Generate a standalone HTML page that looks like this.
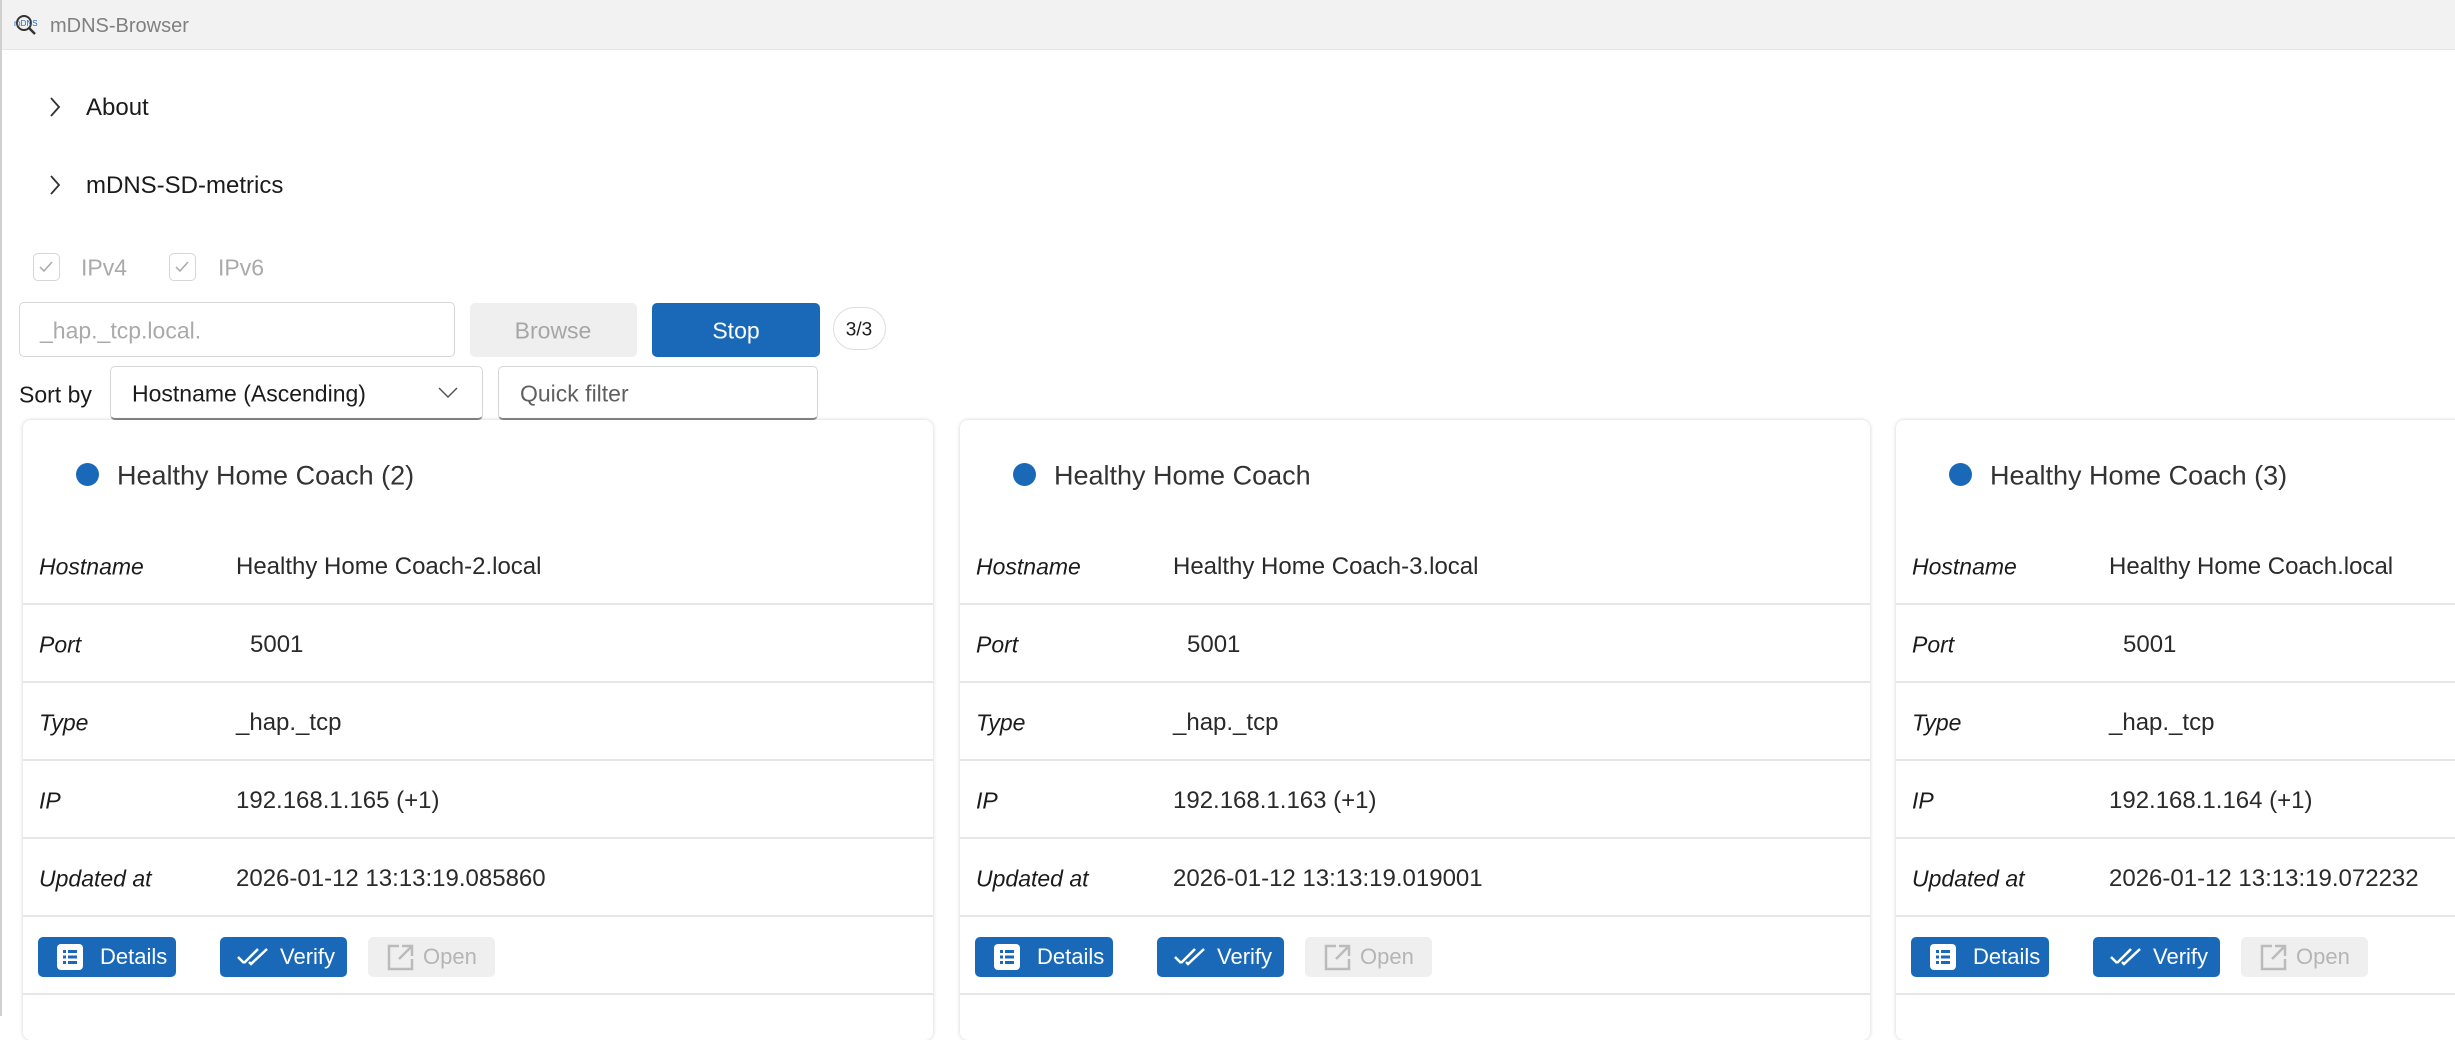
<!DOCTYPE html>
<html><head><meta charset="utf-8"><style>
*{box-sizing:border-box;margin:0;padding:0}
body{width:2455px;height:1016px;overflow:hidden;background:#fff;font-family:"Liberation Sans",sans-serif;color:#1b1b1b;position:relative}
.abs{position:absolute}
.tb{left:0;top:0;width:2455px;height:50px;background:#f2f2f2;border-bottom:1px solid #e6e6e6}
.lb{left:0;top:0;width:2px;height:1016px;background:#d0d0d0}
.t{font-size:23px;line-height:1;white-space:nowrap}
.vc{transform:translateY(-50%)}
.box{border:1px solid #d6d6d6;border-radius:5px}
.card{top:420px;width:910px;height:620px;background:#fff;border-radius:8px;box-shadow:0 0 4px rgba(0,0,0,.18)}
.row{position:absolute;left:0;right:0;height:78px;border-bottom:2px solid #e6e6e6}
.row .l{position:absolute;left:16px;top:40px;transform:translateY(-50%);font-style:italic;font-size:23px}
.row .v{position:absolute;left:213px;top:40px;transform:translateY(-50%);font-size:24px;color:#2a2a2a}
.btn{position:absolute;top:517px;height:40px;border-radius:5px;background:#1a69b9;color:#fff;font-size:22px}
.btn span{position:absolute;top:20px;transform:translateY(-50%)}
.btn svg{position:absolute;top:7px}
</style></head><body>
<div class="abs tb"></div>
<div class="abs lb"></div>
<svg class="abs" style="left:13px;top:14px" width="26" height="22" viewBox="0 0 26 22"><circle cx="11" cy="9" r="7" fill="none" stroke="#333" stroke-width="2"/><line x1="16" y1="14" x2="22" y2="20" stroke="#333" stroke-width="2.5"/><text x="1" y="12" font-size="8" fill="#1a69b9" font-family="Liberation Sans">mDNS</text></svg>
<div class="abs t vc" style="left:50px;top:26px;font-size:20px;color:#808080">mDNS-Browser</div>

<svg class="abs" style="left:48px;top:96px" width="14" height="22"><path d="M3 2 L11 11 L3 20" fill="none" stroke="#333" stroke-width="1.8"/></svg>
<div class="abs t vc" style="left:86px;top:108px;font-size:24px">About</div>
<svg class="abs" style="left:48px;top:174px" width="14" height="22"><path d="M3 2 L11 11 L3 20" fill="none" stroke="#333" stroke-width="1.8"/></svg>
<div class="abs t vc" style="left:86px;top:186px;font-size:24px">mDNS-SD-metrics</div>

<div class="abs box" style="left:33px;top:253px;width:27px;height:28px"></div>
<svg class="abs" style="left:38px;top:260px" width="16" height="14"><path d="M2 7 L6 11 L14 2" fill="none" stroke="#aaa" stroke-width="1.5"/></svg>
<div class="abs t vc" style="left:81px;top:268px;color:#aaa">IPv4</div>
<div class="abs box" style="left:169px;top:253px;width:27px;height:28px"></div>
<svg class="abs" style="left:174px;top:260px" width="16" height="14"><path d="M2 7 L6 11 L14 2" fill="none" stroke="#aaa" stroke-width="1.5"/></svg>
<div class="abs t vc" style="left:218px;top:268px;color:#aaa">IPv6</div>

<div class="abs box" style="left:19px;top:302px;width:436px;height:55px"></div>
<div class="abs t vc" style="left:40px;top:331px;color:#aaa">_hap._tcp.local.</div>
<div class="abs" style="left:470px;top:303px;width:167px;height:54px;background:#efefef;border-radius:5px"></div>
<div class="abs t vc" style="left:553px;top:331px;color:#a6a6a6;transform:translate(-50%,-50%)">Browse</div>
<div class="abs" style="left:652px;top:303px;width:168px;height:54px;background:#1a69b9;border-radius:5px"></div>
<div class="abs t vc" style="left:736px;top:331px;color:#fff;transform:translate(-50%,-50%)">Stop</div>
<div class="abs" style="left:833px;top:307px;width:53px;height:43px;border:1px solid #ddd;border-radius:22px"></div>
<div class="abs t vc" style="left:859px;top:330px;font-size:19px;transform:translate(-50%,-50%)">3/3</div>

<div class="abs t vc" style="left:19px;top:395px">Sort by</div>
<div class="abs box" style="left:110px;top:366px;width:373px;height:54px;border-bottom:2px solid #888"></div>
<div class="abs t vc" style="left:132px;top:394px">Hostname (Ascending)</div>
<svg class="abs" style="left:437px;top:386px" width="22" height="14"><path d="M2 2 L11 11 L20 2" fill="none" stroke="#555" stroke-width="1.5"/></svg>
<div class="abs box" style="left:498px;top:366px;width:320px;height:54px;border-bottom:2px solid #888"></div>
<div class="abs t vc" style="left:520px;top:394px;color:#5f5f5f">Quick filter</div>

<div class="abs card" style="left:23px">
<div class="abs" style="left:53px;top:43px;width:23px;height:23px;border-radius:50%;background:#1a69b9"></div>
<div class="abs t vc" style="left:94px;top:56px;font-size:27px;color:#333">Healthy Home Coach (2)</div>
<div class="row" style="top:107px"><div class="l">Hostname</div><div class="v">Healthy Home Coach-2.local</div></div>
<div class="row" style="top:185px"><div class="l">Port</div><div class="v" style="left:227px">5001</div></div>
<div class="row" style="top:263px"><div class="l">Type</div><div class="v">_hap._tcp</div></div>
<div class="row" style="top:341px"><div class="l">IP</div><div class="v">192.168.1.165 (+1)</div></div>
<div class="row" style="top:419px"><div class="l">Updated at</div><div class="v">2026-01-12 13:13:19.085860</div></div>
<div class="row" style="top:497px;height:78px"></div>
<div class="btn" style="left:15px;width:138px"><svg style="left:19px" width="26" height="26"><rect x="0" y="0" width="26" height="26" rx="4" fill="#fff"/><g fill="#1a69b9"><rect x="6" y="6" width="3" height="3"/><rect x="11" y="6" width="9" height="3"/><rect x="6" y="11.5" width="3" height="3"/><rect x="11" y="11.5" width="9" height="3"/><rect x="6" y="17" width="3" height="3"/><rect x="11" y="17" width="9" height="3"/></g></svg><span style="left:62px">Details</span></div>
<div class="btn" style="left:197px;width:127px"><svg style="left:16px;top:8px" width="36" height="24"><path d="M2 12 L8 18 M8 18 L22 4 M13 17 L15 19 L31 4" fill="none" stroke="#fff" stroke-width="2.5"/></svg><span style="left:60px">Verify</span></div>
<div class="btn" style="left:345px;width:127px;background:#efefef;color:#b5b5b5"><svg style="left:19px" width="27" height="27"><path d="M12 2 H2 V25 H25 V15 M15 2 H25 V12 M25 2 L12 15" fill="none" stroke="#bbb" stroke-width="2.5"/></svg><span style="left:55px">Open</span></div>
</div>

<div class="abs card" style="left:960px">
<div class="abs" style="left:53px;top:43px;width:23px;height:23px;border-radius:50%;background:#1a69b9"></div>
<div class="abs t vc" style="left:94px;top:56px;font-size:27px;color:#333">Healthy Home Coach</div>
<div class="row" style="top:107px"><div class="l">Hostname</div><div class="v">Healthy Home Coach-3.local</div></div>
<div class="row" style="top:185px"><div class="l">Port</div><div class="v" style="left:227px">5001</div></div>
<div class="row" style="top:263px"><div class="l">Type</div><div class="v">_hap._tcp</div></div>
<div class="row" style="top:341px"><div class="l">IP</div><div class="v">192.168.1.163 (+1)</div></div>
<div class="row" style="top:419px"><div class="l">Updated at</div><div class="v">2026-01-12 13:13:19.019001</div></div>
<div class="row" style="top:497px;height:78px"></div>
<div class="btn" style="left:15px;width:138px"><svg style="left:19px" width="26" height="26"><rect x="0" y="0" width="26" height="26" rx="4" fill="#fff"/><g fill="#1a69b9"><rect x="6" y="6" width="3" height="3"/><rect x="11" y="6" width="9" height="3"/><rect x="6" y="11.5" width="3" height="3"/><rect x="11" y="11.5" width="9" height="3"/><rect x="6" y="17" width="3" height="3"/><rect x="11" y="17" width="9" height="3"/></g></svg><span style="left:62px">Details</span></div>
<div class="btn" style="left:197px;width:127px"><svg style="left:16px;top:8px" width="36" height="24"><path d="M2 12 L8 18 M8 18 L22 4 M13 17 L15 19 L31 4" fill="none" stroke="#fff" stroke-width="2.5"/></svg><span style="left:60px">Verify</span></div>
<div class="btn" style="left:345px;width:127px;background:#efefef;color:#b5b5b5"><svg style="left:19px" width="27" height="27"><path d="M12 2 H2 V25 H25 V15 M15 2 H25 V12 M25 2 L12 15" fill="none" stroke="#bbb" stroke-width="2.5"/></svg><span style="left:55px">Open</span></div>
</div>

<div class="abs card" style="left:1896px">
<div class="abs" style="left:53px;top:43px;width:23px;height:23px;border-radius:50%;background:#1a69b9"></div>
<div class="abs t vc" style="left:94px;top:56px;font-size:27px;color:#333">Healthy Home Coach (3)</div>
<div class="row" style="top:107px"><div class="l">Hostname</div><div class="v">Healthy Home Coach.local</div></div>
<div class="row" style="top:185px"><div class="l">Port</div><div class="v" style="left:227px">5001</div></div>
<div class="row" style="top:263px"><div class="l">Type</div><div class="v">_hap._tcp</div></div>
<div class="row" style="top:341px"><div class="l">IP</div><div class="v">192.168.1.164 (+1)</div></div>
<div class="row" style="top:419px"><div class="l">Updated at</div><div class="v">2026-01-12 13:13:19.072232</div></div>
<div class="row" style="top:497px;height:78px"></div>
<div class="btn" style="left:15px;width:138px"><svg style="left:19px" width="26" height="26"><rect x="0" y="0" width="26" height="26" rx="4" fill="#fff"/><g fill="#1a69b9"><rect x="6" y="6" width="3" height="3"/><rect x="11" y="6" width="9" height="3"/><rect x="6" y="11.5" width="3" height="3"/><rect x="11" y="11.5" width="9" height="3"/><rect x="6" y="17" width="3" height="3"/><rect x="11" y="17" width="9" height="3"/></g></svg><span style="left:62px">Details</span></div>
<div class="btn" style="left:197px;width:127px"><svg style="left:16px;top:8px" width="36" height="24"><path d="M2 12 L8 18 M8 18 L22 4 M13 17 L15 19 L31 4" fill="none" stroke="#fff" stroke-width="2.5"/></svg><span style="left:60px">Verify</span></div>
<div class="btn" style="left:345px;width:127px;background:#efefef;color:#b5b5b5"><svg style="left:19px" width="27" height="27"><path d="M12 2 H2 V25 H25 V15 M15 2 H25 V12 M25 2 L12 15" fill="none" stroke="#bbb" stroke-width="2.5"/></svg><span style="left:55px">Open</span></div>
</div>
</body></html>
